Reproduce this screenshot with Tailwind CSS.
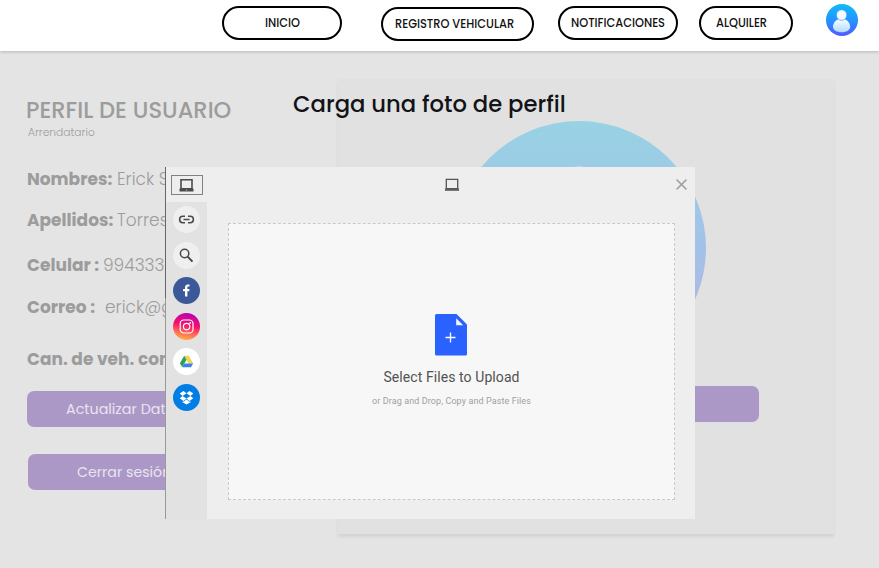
<!DOCTYPE html>
<html lang="es">
<head>
<meta charset="utf-8">
<title>Perfil de usuario</title>
<script src="https://cdn.jsdelivr.net/npm/@tailwindcss/browser@4"></script>
</head>
<body class="relative h-[568px] w-[879px] overflow-hidden bg-[#e4e4e4] font-['Poppins','Inter',sans-serif] whitespace-nowrap">
<header class="relative flex h-[51px] items-start bg-white text-[11.4px] font-medium text-[#111] shadow-[0_1px_3px_rgba(0,0,0,0.2)]">
  <a class="mt-[6px] ml-[222px] flex h-[34px] w-[120px] items-center rounded-full border-2 border-black pt-[2px] pl-[41px]">INICIO</a>
  <a class="mt-[7px] ml-[39px] flex h-[34px] w-[153px] items-center rounded-full border-2 border-black pt-px pl-[12px]">REGISTRO VEHICULAR</a>
  <a class="mt-[6px] ml-[24px] flex h-[34px] w-[120px] items-center rounded-full border-2 border-black pt-[2px] pl-[11px]">NOTIFICACIONES</a>
  <a class="mt-[6px] ml-[21px] flex h-[34px] w-[94px] items-center rounded-full border-2 border-black pt-[2px] pl-[15px]">ALQUILER</a>
  <svg class="mt-[4px] ml-[33px] size-[32px]" viewBox="0 0 32 32">
    <defs>
      <linearGradient id="av" x1="0" y1="0" x2="0" y2="1"><stop offset="0" stop-color="#0ebcf8"/><stop offset=".55" stop-color="#2590ff"/><stop offset="1" stop-color="#5558ff"/></linearGradient>
      <linearGradient id="avb" x1="0" y1="0" x2="0" y2="1"><stop offset="0" stop-color="#fff"/><stop offset="1" stop-color="#addcff"/></linearGradient>
    </defs>
    <circle cx="16" cy="16" r="16" fill="url(#av)"/>
    <path d="M15.600 14.500c4.600 0 8.600 3.900 8.600 8.300 0 3.300-3.700 5.500-8.600 5.500s-8.600-2.200-8.600-5.500c0-4.400 4-8.300 8.600-8.300z" fill="url(#avb)"/>
    <circle cx="15.600" cy="11" r="5.300" fill="#f4faff" stroke="#2f9cff" stroke-width=".7"/>
  </svg>
</header>

<main class="flex">
  <section class="w-[338px] pt-[46px] pl-[27px] text-[#9c9c9c]">
    <h1 class="-ml-px pt-px text-[22.600px] leading-[25px] font-medium">PERFIL DE USUARIO</h1>
    <p class="h-[18px] pt-px pl-px text-[10.7px] leading-[18px] font-light">Arrendatario</p>
    <dl class="mt-[18px] text-[17px]">
      <div class="flex h-[41px] items-center pt-px"><dt class="w-[90px] font-bold">Nombres:</dt><dd class="font-light">Erick Soto</dd></div>
      <div class="flex h-[41px] items-center pt-px"><dt class="w-[90px] font-bold">Apellidos:</dt><dd class="font-light">Torres</dd></div>
      <div class="flex h-[47px] items-center pt-[2px]"><dt class="w-[76px] font-bold">Celular :</dt><dd class="font-light">994333</dd></div>
      <div class="flex h-[37px] items-center pt-[2px]"><dt class="w-[78px] font-bold">Correo :</dt><dd class="font-light">erick@gmail</dd></div>
      <div class="flex h-[66px] items-center pt-[3px]"><dt class="font-bold">Can. de veh. comprados</dt></div>
    </dl>
    <button class="flex h-[36px] w-[220px] items-center rounded-[7px] bg-[#ab98c7] pt-px pl-[39px] text-[14.300px] text-[#eae4f0]">Actualizar Datos</button>
    <button class="mt-[27px] ml-px flex h-[36px] w-[220px] items-center rounded-[7px] bg-[#ab98c7] pt-px pl-[49px] text-[14.200px] text-[#eae4f0]">Cerrar sesión</button>
  </section>
  <section class="mt-[28px] flex h-[455px] w-[496px] flex-col items-center bg-[#e1e1e1] pt-[42px] shadow-[0_3px_3px_rgba(0,0,0,0.07)]">
    <svg class="-ml-[14px] size-[254px] shrink-0" viewBox="0 0 254 254">
      <defs><linearGradient id="big" x1="0" y1="0" x2="0" y2="1"><stop offset="0" stop-color="#98d2e3"/><stop offset=".5" stop-color="#a2c2e8"/><stop offset=".75" stop-color="#aeb8e3"/><stop offset="1" stop-color="#b2aee6"/></linearGradient></defs>
      <circle cx="127" cy="127" r="127" fill="url(#big)"/>
      <circle cx="127" cy="87.500" r="42" fill="#e4eef2"/>
    </svg>
    <button class="mt-[11px] ml-[168px] h-[36px] w-[178px] shrink-0 rounded-[7px] bg-[#ab98c7]"></button>
  </section>
</main>

<h2 class="absolute top-[90px] left-[293px] text-[22.700px] leading-[28px] font-medium text-[#111317]">Carga una foto de perfil</h2>

<div class="absolute top-[167px] left-[165px] flex h-[352px] w-[530px] bg-[#eeeeee] font-['Roboto',sans-serif]">
  <nav class="flex w-[42px] shrink-0 flex-col bg-[#e2e2e2]">
    <div class="flex h-[35px] bg-[#eeeeee] pt-[8px] pl-[6px]">
      <div class="flex h-[20px] w-[32px] items-center justify-center border border-[#828282]">
        <svg class="mr-px size-[15px]" viewBox="0 0 15 15"><path d="M2 1.700h11v9H2z" fill="none" stroke="#4b4b4b" stroke-width="1.600"/><path d="M.5 10.600h14v2.900H.5z" fill="#4b4b4b"/><path d="M6.800 11.600h1.500v.8H6.800z" fill="#ccc"/></svg>
      </div>
    </div>
    <div class="flex flex-col items-center gap-[8.500px] pt-[4px] pl-px">
      <svg class="size-[27px]" viewBox="0 0 27 27"><circle cx="13.500" cy="13.500" r="13.500" fill="#efefef"/><path d="M12 10.200H9.900a3.300 3.300 0 0 0 0 6.600H12M15 10.200h2.100a3.300 3.300 0 0 1 0 6.600H15M10.500 13.500h6" fill="none" stroke="#4c4c4c" stroke-width="1.600"/></svg>
      <svg class="size-[27px]" viewBox="0 0 27 27"><circle cx="13.500" cy="13.500" r="13.500" fill="#efefef"/><circle cx="11.600" cy="11.500" r="4.200" fill="none" stroke="#474747" stroke-width="1.500"/><path d="M14.600 14.600l4.900 5" stroke="#474747" stroke-width="2"/></svg>
      <svg class="size-[27px]" viewBox="0 0 27 27"><circle cx="13.500" cy="13.500" r="13.500" fill="#3b5998"/><path d="M12 19.500v-5.300h-1.900V12H12v-1.600c0-2 1.200-3 2.900-3h1.600v2.100h-1.100c-.8 0-1 .4-1 1V12h2.100l-.3 2.200h-1.800v5.300z" fill="#fff"/></svg>
      <svg class="size-[27px]" viewBox="0 0 27 27"><defs><linearGradient id="ig" x1=".6" y1="0" x2=".4" y2="1"><stop offset="0" stop-color="#b900b4"/><stop offset=".45" stop-color="#f5116c"/><stop offset=".75" stop-color="#ff6d55"/><stop offset="1" stop-color="#ffb33f"/></linearGradient></defs><circle cx="13.500" cy="13.500" r="13.500" fill="url(#ig)"/><rect x="7.200" y="7" width="12.800" height="13" rx="3.600" fill="none" stroke="#fff" stroke-width="1.200"/><circle cx="13.600" cy="13.600" r="3.200" fill="none" stroke="#fff" stroke-width="1.200"/><circle cx="17.200" cy="9.900" r=".9" fill="#fff"/></svg>
      <svg class="size-[27px]" viewBox="0 0 27 27"><circle cx="13.500" cy="13.500" r="13.500" fill="#fff"/><path d="M11.200 7.700h4.500l4.500 7.700h-4.500z" fill="#f8d14a"/><path d="M11.200 7.700l2.300 4-4.300 7.600-2.300-4z" fill="#28a35a"/><path d="M11.500 15.400h8.700l-2.300 3.900H9.200z" fill="#3f7fe8"/></svg>
      <svg class="size-[27px]" viewBox="0 0 27 27"><circle cx="13.500" cy="13.500" r="13.500" fill="#007ee5"/><path d="M10.500 7l3 2.300-3.900 2.600L6.700 9.600zM16.500 7l-3 2.300 3.900 2.600 2.900-2.300zM6.700 14.200l2.900-2.300 3.900 2.600-3 2.400zM20.300 14.200l-2.900-2.300-3.900 2.600 3 2.400zM9.500 17.200l1 .6 3-2.400 3 2.400 1-.6v1l-4 2.400-4-2.400z" fill="#fff"/></svg>
    </div>
  </nav>
  <div class="flex grow flex-col">
    <div class="flex h-[56px] items-start pt-[11px]">
      <svg class="ml-[238px] size-[14px]" viewBox="0 0 14 14"><path d="M1.300 1.300h11.400v9.400H1.300z" fill="none" stroke="#555" stroke-width="1.300"/><path d="M0 10.400h14v2.400H0z" fill="#5c5c5c"/></svg>
      <svg class="mt-px ml-[217px] size-[11px]" viewBox="0 0 11 11"><path d="M.6.6l9.800 9.800M10.400.6L.6 10.400" stroke="#a2a2a2" stroke-width="1.500"/></svg>
    </div>
    <div class="mr-[20px] ml-[21px] flex h-[277px] flex-col items-center border border-dashed border-[#c9c9c9] bg-[#f7f7f7] pt-[90px]">
      <svg class="mr-[1px] h-[42px] w-[32px] shrink-0" viewBox="0 0 32 42"><path d="M1.500 0H21.500L32 10.500V40q0 1.500-1.500 1.500h-29Q0 41.500 0 40V1.500Q0 0 1.500 0z" fill="#2962ff"/><path d="M21.200 4.200v7.100h7z" fill="#f7f7f7"/><path d="M15.500 18.500v10M10.500 23.500h10" stroke="#fff" stroke-width="1.300"/></svg>
      <div class="mt-[11px] text-[14px] leading-[20px] tracking-[0.08px] text-[#525252]">Select Files to Upload</div>
      <div class="mt-[6px] text-[9px] leading-[16px] tracking-[0.1px] text-[#a0a0a0]">or Drag and Drop, Copy and Paste Files</div>
    </div>
  </div>
  <div class="absolute top-0 left-0 h-[131px] w-px bg-[#666]"></div>
  <div class="absolute top-[131px] left-0 h-[221px] w-px bg-[#999]"></div>
</div>
</body>
</html>
